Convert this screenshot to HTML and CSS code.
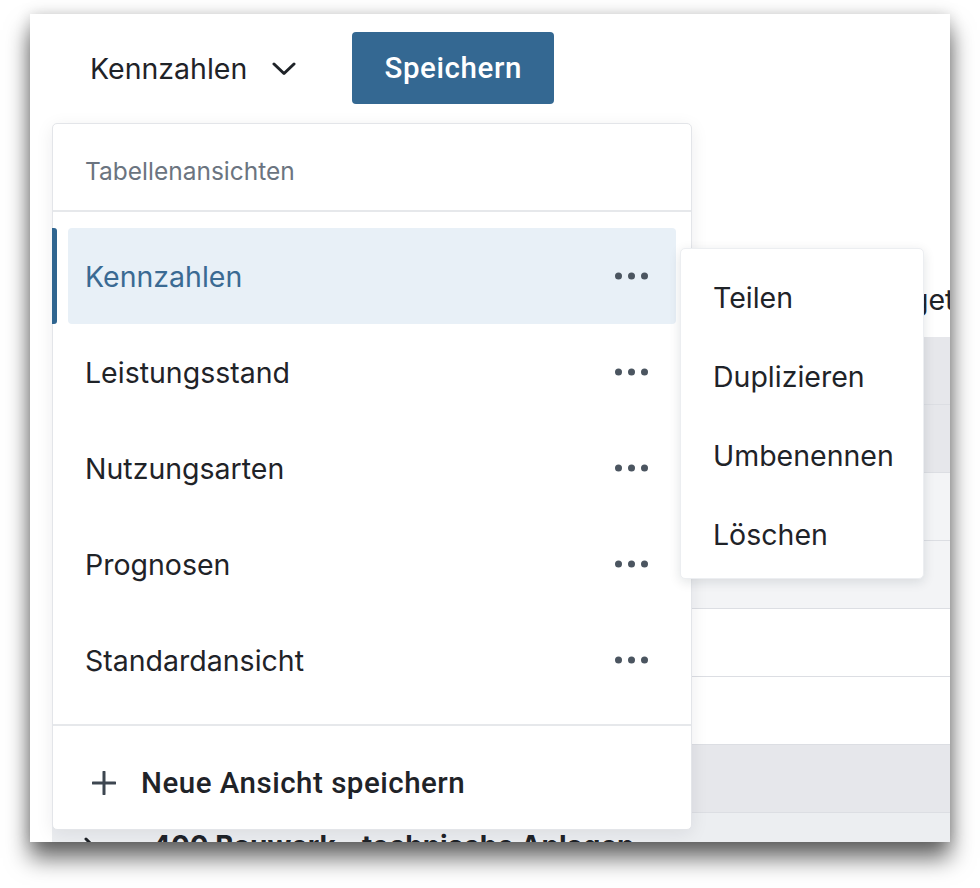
FILE: index.html
```html
<!DOCTYPE html>
<html lang="de">
<head>
<meta charset="utf-8">
<title>Tabellenansichten</title>
<link rel="stylesheet" href="styles.css">
</head>
<body>
<div class="screen">
  <div class="window">
    <header class="toolbar">
      <button class="view-toggle" type="button">
        <span>Kennzahlen</span>
        <svg class="chevron" width="24" height="14" viewBox="0 0 24 14"><path d="M2 2 L12 11.5 L22 2" fill="none" stroke="#1f2328" stroke-width="3" stroke-linecap="round" stroke-linejoin="round"/></svg>
      </button>
      <button class="save" type="button">Speichern</button>
    </header>

    <div class="table">
      <div class="row head"><span class="cell-budget">Budget</span></div>
      <div class="row grey"></div>
      <div class="row grey"></div>
      <div class="row light"></div>
      <div class="row light"></div>
      <div class="row"></div>
      <div class="row"></div>
      <div class="row grey"></div>
      <div class="row grey group"><svg class="caret" width="12" height="18" viewBox="0 0 12 18"><path d="M2 2 L9 9 L2 16" fill="none" stroke="#1f2328" stroke-width="3" stroke-linecap="round" stroke-linejoin="round"/></svg><span>400 Bauwerk - technische Anlagen</span></div>
    </div>

    <div class="dropdown">
      <div class="dd-head">Tabellenansichten</div>
      <ul class="dd-list">
        <li class="dd-item active"><span>Kennzahlen</span><svg class="dots" width="33" height="8" viewBox="0 0 33 8"><circle cx="3.5" cy="4" r="3.5"/><circle cx="16.5" cy="4" r="3.5"/><circle cx="29.5" cy="4" r="3.5"/></svg></li>
        <li class="dd-item"><span>Leistungsstand</span><svg class="dots" width="33" height="8" viewBox="0 0 33 8"><circle cx="3.5" cy="4" r="3.5"/><circle cx="16.5" cy="4" r="3.5"/><circle cx="29.5" cy="4" r="3.5"/></svg></li>
        <li class="dd-item"><span>Nutzungsarten</span><svg class="dots" width="33" height="8" viewBox="0 0 33 8"><circle cx="3.5" cy="4" r="3.5"/><circle cx="16.5" cy="4" r="3.5"/><circle cx="29.5" cy="4" r="3.5"/></svg></li>
        <li class="dd-item"><span>Prognosen</span><svg class="dots" width="33" height="8" viewBox="0 0 33 8"><circle cx="3.5" cy="4" r="3.5"/><circle cx="16.5" cy="4" r="3.5"/><circle cx="29.5" cy="4" r="3.5"/></svg></li>
        <li class="dd-item"><span>Standardansicht</span><svg class="dots" width="33" height="8" viewBox="0 0 33 8"><circle cx="3.5" cy="4" r="3.5"/><circle cx="16.5" cy="4" r="3.5"/><circle cx="29.5" cy="4" r="3.5"/></svg></li>
      </ul>
      <div class="dd-foot">
        <svg class="plus" width="24" height="24" viewBox="0 0 24 24"><path d="M12 1 V23 M1 12 H23" stroke="#3d4650" stroke-width="3" stroke-linecap="round"/></svg>
        <span>Neue Ansicht speichern</span>
      </div>
    </div>

    <ul class="submenu">
      <li>Teilen</li>
      <li>Duplizieren</li>
      <li>Umbenennen</li>
      <li>Löschen</li>
    </ul>
  </div>
</div>
</body>
</html>
```

FILE: styles.css
```css
* { box-sizing: border-box; }
html, body { margin: 0; padding: 0; }
body {
  width: 980px;
  height: 888px;
  overflow: hidden;
  background: #ffffff;
  font-family: Inter, "Noto Sans", sans-serif;
  color: #1f2328;
}
.screen { padding: 14px 30px 0; }
.window {
  position: relative;
  width: 920px;
  height: 828px;
  background: #ffffff;
  overflow: hidden;
  box-shadow: 0 16px 22px rgba(0,0,0,0.6), 0 0 14px rgba(0,0,0,0.16);
}

/* toolbar */
.toolbar {
  display: flex;
  align-items: center;
  height: 90px;
  padding: 18px 0 0 60px;
}
.view-toggle {
  display: flex;
  align-items: center;
  gap: 25px;
  background: none;
  border: 0;
  padding: 0;
  font: 400 28.5px Inter, sans-serif;
  color: #1f2328;
}
.chevron { display: block; margin-top: 2px; }
.save {
  margin-left: 56px;
  width: 202px;
  height: 72px;
  background: #346892;
  color: #ffffff;
  border: 0;
  border-radius: 4px;
  font: 500 29.5px Roboto, sans-serif;
  letter-spacing: 0.6px;
  padding: 0;
}

/* background table */
.table {
  margin-top: 158px;
  margin-left: 22px;
  display: flex;
  flex-direction: column;
}
.row {
  height: 68px;
  border-bottom: 1px solid #dcdee3;
  background: #ffffff;
  display: flex;
  align-items: center;
}
.row.head { height: 75px; border-bottom: 0; }
.row.grey { background: #e6e7eb; }
.row.light { background: #f3f4f6; }
.cell-budget {
  margin-left: 806px;
  font-size: 28.5px;
  color: #1f2328;
  white-space: nowrap;
}
.row.group {
  height: 66px;
  background: #eceef1;
  font-weight: 700;
  font-size: 28px;
  color: #1f2328;
  gap: 56px;
  padding-left: 32px;
  white-space: nowrap;
}
.caret { display: block; }

/* dropdown */
.dropdown {
  position: absolute;
  left: 22px;
  top: 109px;
  width: 640px;
  height: 707px;
  background: #ffffff;
  border: 1px solid #e3e5e9;
  border-radius: 5px;
  box-shadow: 0 4px 18px rgba(20,30,40,0.08);
  display: flex;
  flex-direction: column;
}
.dd-head {
  height: 88px;
  padding: 8px 0 0 32px;
  display: flex;
  align-items: center;
  border-bottom: 2px solid #e6e8eb;
  font-size: 24.5px;
  color: #6b7480;
}
.dd-list {
  list-style: none;
  margin: 0;
  padding: 16px 15px;
}
.dd-item {
  position: relative;
  height: 96px;
  display: flex;
  align-items: center;
  justify-content: space-between;
  padding: 0 28px 0 17px;
  font-size: 28.5px;
  color: #1f2328;
  border-radius: 4px;
}
.dd-item.active {
  background: #e8f0f7;
  color: #3a6a93;
}
.dd-item.active::before {
  content: "";
  position: absolute;
  left: -16px;
  top: 0;
  width: 5px;
  height: 96px;
  background: #2f6590;
  border-radius: 0 3px 3px 0;
}
.dots { display: block; fill: #4b5560; }
.dd-foot {
  flex: 1;
  display: flex;
  align-items: center;
  gap: 25px;
  padding: 10px 0 0 39px;
  border-top: 2px solid #e6e8eb;
  font: 500 29.5px Roboto, sans-serif;
  letter-spacing: 0.5px;
  color: #1f2328;
}
.plus { display: block; }

/* submenu */
.submenu {
  position: absolute;
  left: 650px;
  top: 234px;
  width: 244px;
  height: 331px;
  margin: 0;
  padding: 9px 0 0;
  list-style: none;
  background: #ffffff;
  border: 1px solid #eceef1;
  border-radius: 5px;
  box-shadow: 0 3px 12px rgba(20,30,40,0.12);
}
.submenu li {
  height: 79px;
  display: flex;
  align-items: center;
  padding-left: 32px;
  font-size: 28.5px;
  color: #1f2328;
}
```
